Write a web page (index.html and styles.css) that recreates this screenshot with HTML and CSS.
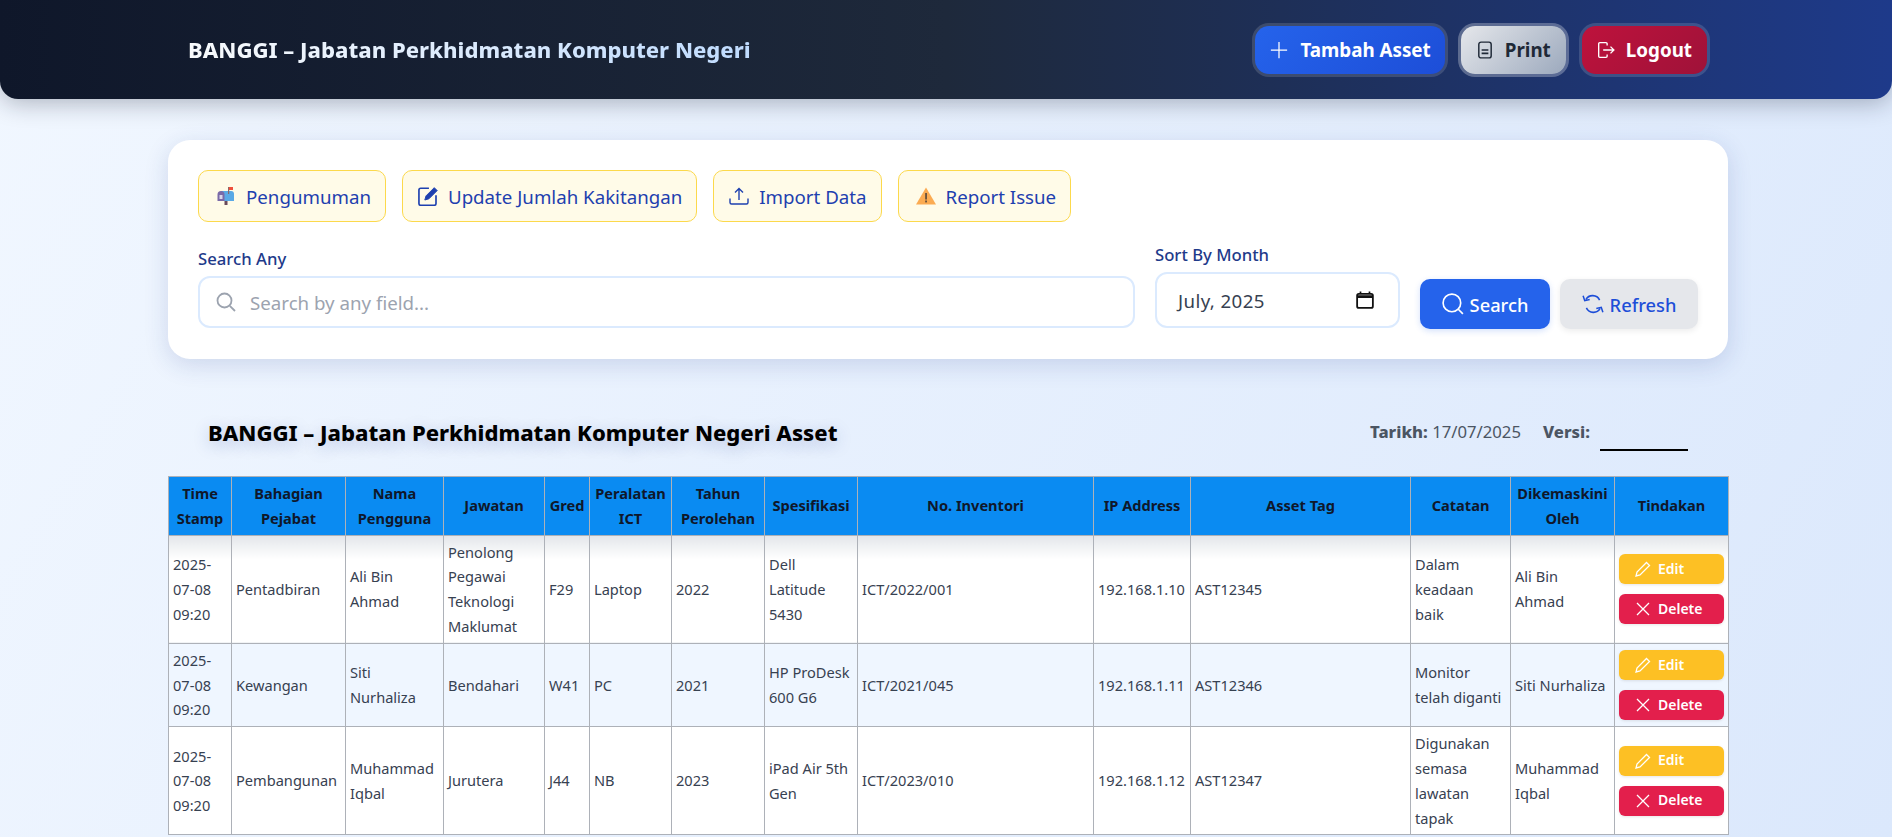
FILE: index.html
```html
<!DOCTYPE html>
<html lang="en">
  <head>
    <meta charset="UTF-8" />
    <meta name="viewport" content="width=device-width, initial-scale=1.0" />
    <title>BANGGI Asset</title>
    <link rel="stylesheet" href="styles.css">
  </head>

  <body>
    <!-- Header -->
    <header class="topbar">
      <div class="brand">BANGGI – Jabatan Perkhidmatan Komputer Negeri</div>
      <nav class="top-actions">
        <a class="top-btn btn-add">
          <svg class="icon-20" viewBox="0 0 16 16" fill="none" stroke="currentColor" stroke-width="1"><path d="M8 1.500v13M1.500 8h13"/></svg>
          Tambah Asset
        </a>
        <a class="top-btn btn-print">
          <svg class="icon-18" viewBox="0 0 16 16" fill="none" stroke="currentColor" stroke-width="1.300"><rect x="2.500" y="1" width="11" height="14" rx="2"/><path d="M5 8h6M5 11h6" stroke-width="1.500"/></svg>
          Print
        </a>
        <a class="top-btn btn-logout">
          <svg class="icon-18" viewBox="0 0 16 16" fill="none" stroke="currentColor" stroke-width="1.200"><path d="M9 4V2.500A1 1 0 0 0 8 1.500H2.500a1 1 0 0 0-1 1v11a1 1 0 0 0 1 1H8a1 1 0 0 0 1-1V12"/><path d="M5.500 8h9.500M12 5l3 3-3 3"/></svg>
          Logout
        </a>
      </nav>
    </header>

    <main class="page">
      <!-- Filter card -->
      <section class="card">
        <div class="chips">
          <a class="chip">
            <svg class="icon-20 chip-emoji" viewBox="0 0 20 20"><rect x="8.500" y="12" width="3" height="7" fill="#6b4a5a"/><path d="M5 5h10a3 3 0 0 1 3 3v7H8z" fill="#5aa9e6"/><path d="M5 5a3.500 3.500 0 0 1 3.500 3.500V15H1.500V8.500A3.500 3.500 0 0 1 5 5z" fill="#7a6aa8"/><rect x="3.500" y="9" width="3" height="4" fill="#d9d6ea"/><rect x="12" y="1" width="1.200" height="7" fill="#8a6a6a"/><rect x="13" y="1" width="4" height="3" fill="#ef4f3c"/></svg>
            Pengumuman
          </a>
          <a class="chip">
            <svg class="icon-20" viewBox="1.200 1.600 17 17" fill="none" stroke="currentColor" stroke-width="1.400"><path d="M10.500 3.500H3.500a1.500 1.500 0 0 0-1.500 1.500v11.500A1.500 1.500 0 0 0 3.500 18H15a1.500 1.500 0 0 0 1.500-1.500V9.500"/><path d="M7 13.500l1-3.500 7-7 2.500 2.500-7 7z" fill="currentColor" stroke-width="0.800"/></svg>
            Update Jumlah Kakitangan
          </a>
          <a class="chip">
            <svg class="icon-20" viewBox="0 0 20 20" fill="none" stroke="currentColor" stroke-width="1.400"><path d="M10 14V2.500M6 6.500l4-4 4 4"/><path d="M1 12.500v4a1.500 1.500 0 0 0 1.500 1.500h15a1.500 1.500 0 0 0 1.500-1.500v-4"/></svg>
            Import Data
          </a>
          <a class="chip">
            <svg class="icon-20 chip-emoji" viewBox="0 0 20 20"><path d="M10 1.500L20 18.500H0z" fill="#fbab52"/><rect x="9.200" y="7" width="1.700" height="6.500" fill="#5b4a3a"/><rect x="9.200" y="14.500" width="1.700" height="1.900" fill="#5b4a3a"/></svg>
            Report Issue
          </a>
        </div>

        <div class="filters">
          <div class="field field-search">
            <label class="field-label">Search Any</label>
            <div class="search-box">
              <svg class="search-icon" viewBox="0 0 20 20" fill="none" stroke="currentColor" stroke-width="1.800"><circle cx="8.500" cy="8.500" r="7"/><path d="M13.800 13.800L19 19"/></svg>
              <input class="search-input" type="text" placeholder="Search by any field..." />
            </div>
          </div>
          <div class="field field-month">
            <label class="field-label">Sort By Month</label>
            <div class="month-box">
              <span>July, 2025</span>
              <svg class="icon-18" viewBox="0 0 16 16" fill="none" stroke="#111" stroke-width="1.600"><rect x="1" y="2.500" width="14" height="12.500" rx="1.500"/><path d="M1 5h14" stroke-width="2.500"/><path d="M4 0.500v2M12 0.500v2" stroke-width="1.500"/></svg>
            </div>
          </div>
          <button class="action-btn btn-search">
            <svg class="icon-22" viewBox="0 0 20 20" fill="none" stroke="currentColor" stroke-width="1.500"><circle cx="9" cy="9" r="8"/><path d="M14.800 14.800L19 19"/></svg>
            Search
          </button>
          <button class="action-btn btn-refresh">
            <svg class="icon-22" viewBox="0 0 20 20" fill="none" stroke="currentColor" stroke-width="1.400"><path d="M16 6.500A7 7 0 0 0 3.500 6"/><path d="M1 2.500l1.500 4.500 4.500-1"/><path d="M4 13.500a7 7 0 0 0 12.500.5"/><path d="M19 17.500L17.500 13l-4.500 1"/></svg>
            Refresh
          </button>
        </div>
      </section>

      <!-- Table title -->
      <div class="table-head">
        <h2 class="table-title">BANGGI – Jabatan Perkhidmatan Komputer Negeri Asset</h2>
        <div class="meta">
          <span class="meta-text"><b>Tarikh:</b> 17/07/2025</span>
          <b class="meta-text meta-versi">Versi:</b>
          <span class="meta-line"></span>
        </div>
      </div>

      <table class="asset-table">
        <colgroup>
          <col class="c1"><col class="c2"><col class="c3"><col class="c4"><col class="c5"><col class="c6"><col class="c7">
          <col class="c8"><col class="c9"><col class="c10"><col class="c11"><col class="c12"><col class="c13"><col class="c14">
        </colgroup>
        <thead>
          <tr>
            <th>Time Stamp</th>
            <th>Bahagian Pejabat</th>
            <th>Nama Pengguna</th>
            <th>Jawatan</th>
            <th>Gred</th>
            <th>Peralatan ICT</th>
            <th>Tahun Perolehan</th>
            <th>Spesifikasi</th>
            <th>No. Inventori</th>
            <th>IP Address</th>
            <th>Asset Tag</th>
            <th>Catatan</th>
            <th>Dikemaskini Oleh</th>
            <th>Tindakan</th>
          </tr>
        </thead>
        <tbody>
          <tr>
            <td>2025-07-08 09:20</td>
            <td>Pentadbiran</td>
            <td>Ali Bin Ahmad</td>
            <td>Penolong Pegawai Teknologi Maklumat</td>
            <td>F29</td>
            <td>Laptop</td>
            <td>2022</td>
            <td>Dell Latitude 5430</td>
            <td>ICT/2022/001</td>
            <td>192.168.1.10</td>
            <td>AST12345</td>
            <td>Dalam<br>keadaan<br>baik</td>
            <td>Ali Bin Ahmad</td>
            <td>
              <div class="row-actions">
                <a class="row-btn btn-edit"><svg class="icon-16" viewBox="0 0 16 16" fill="none" stroke="currentColor" stroke-width="1.300"><path d="M11.500 1.500l3 3L5 14l-4 1 1-4z"/></svg>Edit</a>
                <a class="row-btn btn-delete"><svg class="icon-16" viewBox="0 0 16 16" fill="none" stroke="currentColor" stroke-width="1.300"><path d="M2 2l12 12M14 2L2 14"/></svg>Delete</a>
              </div>
            </td>
          </tr>
          <tr>
            <td>2025-07-08 09:20</td>
            <td>Kewangan</td>
            <td>Siti Nurhaliza</td>
            <td>Bendahari</td>
            <td>W41</td>
            <td>PC</td>
            <td>2021</td>
            <td>HP ProDesk 600 G6</td>
            <td>ICT/2021/045</td>
            <td>192.168.1.11</td>
            <td>AST12346</td>
            <td>Monitor telah diganti</td>
            <td>Siti Nurhaliza</td>
            <td>
              <div class="row-actions">
                <a class="row-btn btn-edit"><svg class="icon-16" viewBox="0 0 16 16" fill="none" stroke="currentColor" stroke-width="1.300"><path d="M11.500 1.500l3 3L5 14l-4 1 1-4z"/></svg>Edit</a>
                <a class="row-btn btn-delete"><svg class="icon-16" viewBox="0 0 16 16" fill="none" stroke="currentColor" stroke-width="1.300"><path d="M2 2l12 12M14 2L2 14"/></svg>Delete</a>
              </div>
            </td>
          </tr>
          <tr>
            <td>2025-07-08 09:20</td>
            <td>Pembangunan</td>
            <td>Muhammad Iqbal</td>
            <td>Jurutera</td>
            <td>J44</td>
            <td>NB</td>
            <td>2023</td>
            <td>iPad Air 5th Gen</td>
            <td>ICT/2023/010</td>
            <td>192.168.1.12</td>
            <td>AST12347</td>
            <td>Digunakan semasa lawatan tapak</td>
            <td>Muhammad Iqbal</td>
            <td>
              <div class="row-actions">
                <a class="row-btn btn-edit"><svg class="icon-16" viewBox="0 0 16 16" fill="none" stroke="currentColor" stroke-width="1.300"><path d="M11.500 1.500l3 3L5 14l-4 1 1-4z"/></svg>Edit</a>
                <a class="row-btn btn-delete"><svg class="icon-16" viewBox="0 0 16 16" fill="none" stroke="currentColor" stroke-width="1.300"><path d="M2 2l12 12M14 2L2 14"/></svg>Delete</a>
              </div>
            </td>
          </tr>
        </tbody>
      </table>
    </main>
  </body>
</html>
```

FILE: styles.css
```css
html,
body {
  height: 100%;
  overflow: hidden;
}
body {
  margin: 0;
  font-family: "Noto Sans", Roboto, sans-serif;
  color: #374151;
  background: linear-gradient(120deg, #f1f7ff 0%, #dbe8fc 100%);
}
.icon-16 { width: 16px; height: 16px; flex: none; }
.icon-18 { width: 18px; height: 18px; flex: none; }
.icon-20 { width: 20px; height: 20px; flex: none; }
.icon-22 { width: 22px; height: 22px; flex: none; }

/* header */
.topbar {
  height: 99px;
  box-sizing: border-box;
  padding: 0 182px 0 188px;
  display: flex;
  align-items: center;
  justify-content: space-between;
  background: linear-gradient(90deg, #0f172a 0%, #1e293b 50%, #1e3a8a 100%);
  border-radius: 0 0 18px 18px;
  box-shadow: 0 4px 24px rgba(15, 23, 42, 0.3);
}
.brand {
  font-size: 22px;
  font-weight: 800;
  padding-bottom: 2px;
  background: linear-gradient(90deg, #f8fafc, #bfdbfe);
  -webkit-background-clip: text;
  background-clip: text;
  color: transparent;
}
.top-actions {
  display: flex;
  gap: 10px;
}
.top-btn {
  height: 54px;
  box-sizing: border-box;
  padding: 0 15px;
  display: flex;
  align-items: center;
  gap: 11px;
  border-radius: 17px;
  border: 3px solid rgba(255, 255, 255, 0.14);
  background-clip: padding-box;
  font-size: 18.8px;
  font-weight: 700;
  color: #fff;
}
.btn-add {
  padding: 0 14px;
  background-image: linear-gradient(135deg, #2563eb, #1d4ed8);
}
.btn-print {
  background-image: linear-gradient(135deg, #e5e7eb, #9ca9bd);
  color: #1f2937;
  border-color: rgba(255, 255, 255, 0.28);
}
.btn-logout { background-image: linear-gradient(135deg, #be123c, #9f1239); }

/* main */
.page {
  width: 1560px;
  margin-left: 168px;
  padding-top: 41px;
}
.card {
  height: 219px;
  box-sizing: border-box;
  padding: 30px;
  background: #fff;
  border-radius: 22px;
  box-shadow: 0 6px 24px rgba(30, 58, 138, 0.16);
}
.chips {
  display: flex;
  gap: 16px;
}
.chip {
  height: 52px;
  box-sizing: border-box;
  padding: 0 14px 0 15px;
  display: flex;
  align-items: center;
  gap: 10px;
  background: #fffbe8;
  border: 1px solid #fcd94c;
  border-radius: 10px;
  font-size: 18.7px;
  color: #1e40af;
}
.chip-emoji { margin-left: 2px; }
.filters {
  display: flex;
  align-items: flex-end;
  margin-top: 22px;
}
.field { display: flex; flex-direction: column; }
.field-search { width: 937px; margin-bottom: 1px; }
.field-month { width: 245px; margin: 0 20px 1px 20px; }
.field-label {
  font-size: 16.7px;
  font-weight: 500;
  line-height: 22px;
  color: #1e3a8a;
  margin-bottom: 6px;
}
.search-box {
  height: 52px;
  box-sizing: border-box;
  border: 2px solid #dbeafe;
  border-radius: 12px;
  padding-left: 16px;
  display: flex;
  align-items: center;
  gap: 12px;
  color: #9ca3af;
}
.search-icon { width: 20px; height: 20px; flex: none; }
.search-input {
  flex: 1;
  border: none;
  outline: none;
  font: inherit;
  font-size: 18.7px;
  background: transparent;
}
.search-input::placeholder { color: #9ca3af; opacity: 1; }
.month-box {
  height: 56px;
  box-sizing: border-box;
  border: 2px solid #dbeafe;
  border-radius: 12px;
  padding: 0 24px 0 21px;
  display: flex;
  align-items: center;
  justify-content: space-between;
  font-size: 18.7px;
  letter-spacing: 0.4px;
  color: #374151;
}
.action-btn {
  height: 50px;
  padding: 0;
  display: flex;
  align-items: center;
  justify-content: center;
  gap: 6px;
  border: none;
  border-radius: 10px;
  font: inherit;
  font-size: 18.3px;
  font-weight: 500;
}
.btn-search {
  width: 130px;
  color: #fff;
  background: #2563eb;
  box-shadow: 0 2px 6px rgba(37, 99, 235, 0.2);
}
.btn-refresh {
  width: 138px;
  margin-left: 10px;
  color: #1d4ed8;
  background: #e5e7eb;
  box-shadow: 0 2px 6px rgba(0, 0, 0, 0.08);
}

/* table title */
.table-head {
  height: 117px;
  box-sizing: border-box;
  padding: 0 40px 29px;
  display: flex;
  align-items: flex-end;
  justify-content: space-between;
}
.table-title {
  margin: 0;
  font-size: 22px;
  line-height: 30px;
  font-weight: 800;
  color: #000;
  text-shadow: 0 4px 16px rgba(30, 58, 138, 0.25);
}
.meta {
  display: flex;
  align-items: flex-end;
  margin-bottom: -4px;
  font-size: 16.7px;
  color: #4b5563;
  white-space: nowrap;
}
.meta-text {
  line-height: 30px;
  margin-bottom: 4px;
}
.meta-text b,
b.meta-text { font-weight: 800; }
.meta-versi { margin-left: 22px; }
.meta-line {
  width: 88px;
  margin-left: 10px;
  border-bottom: 2px solid #000;
}

/* table */
.asset-table {
  width: 1560px;
  table-layout: fixed;
  border-collapse: collapse;
  font-size: 14.6px;
  line-height: 24.8px;
}
.c1 { width: 63px; }
.c2 { width: 114px; }
.c3 { width: 98px; }
.c4 { width: 101px; }
.c5 { width: 45px; }
.c6 { width: 82px; }
.c7 { width: 93px; }
.c8 { width: 93px; }
.c9 { width: 236px; }
.c10 { width: 97px; }
.c11 { width: 220px; }
.c12 { width: 100px; }
.c13 { width: 104px; }
.c14 { width: 114px; }
.asset-table th,
.asset-table td {
  border: 1px solid #adb1b8;
  padding: 4px;
  overflow: hidden;
}
.asset-table th {
  background: #0a8bf2;
  color: #0f172a;
  font-weight: 700;
  text-align: center;
}
.asset-table td {
  background: #fff;
  color: #374151;
  text-align: left;
}
.asset-table tbody tr:nth-child(even) td { background: #eff6ff; }
.asset-table tbody tr:first-child td {
  background: linear-gradient(#e3e6ea, #fff 24px);
}
.row-actions {
  display: flex;
  flex-direction: column;
  gap: 10px;
}
.row-btn {
  height: 30px;
  padding-left: 16px;
  display: flex;
  align-items: center;
  gap: 7px;
  border-radius: 6px;
  color: #fff;
  font-size: 14px;
  font-weight: 600;
  box-shadow: 0 1px 3px rgba(0, 0, 0, 0.1);
}
.btn-edit { background: #fdc024; }
.btn-delete { background: #e31f4c; }
```
